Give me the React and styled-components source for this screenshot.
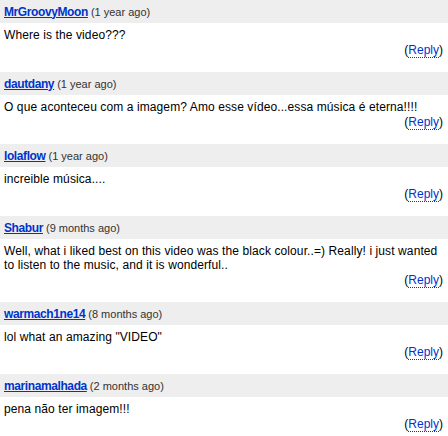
import React from "react"
import styled, { createGlobalStyle } from "styled-components"

const GlobalStyle = createGlobalStyle`
  body {
    margin: 0;
    background: #fff;
    font-family: "Liberation Sans", Arial, sans-serif;
    color: #000;
  }
`

const List = styled.div`
  width: 448px;
  display: flex;
  flex-direction: column;
`

const Header = styled.div`
  height: 23px;
  background: #eeeeee;
  display: flex;
  align-items: center;
  gap: 3px;
  padding: 0 4px;
  box-sizing: border-box;
`

const User = styled.a`
  font-size: 12px;
  letter-spacing: -0.4px;
  font-weight: bold;
  color: #0033cc;
  text-decoration: underline;
  cursor: pointer;
`

const Age = styled.span`
  font-size: 11px;
  color: #333;
`

const Body = styled.div`
  padding: 5px 5px 15px 4px;
`

const Text = styled.div`
  font-size: 12px;
  letter-spacing: 0.1px;
  line-height: 14px;
`

const ReplyRow = styled.div`
  margin-top: 1px;
  font-size: 12px;
  line-height: 14px;
  text-align: right;
`

const ReplyLink = styled.a`
  color: #0033cc;
  text-decoration: none;
  border-bottom: 1px dotted #0033cc;
  cursor: pointer;
`

const comments = [
  { user: "MrGroovyMoon", age: "1 year ago", text: "Where is the video???" },
  {
    user: "dautdany",
    age: "1 year ago",
    text: "O que aconteceu com a imagem? Amo esse vídeo...essa música é eterna!!!!",
  },
  { user: "lolaflow", age: "1 year ago", text: "increible música...." },
  {
    user: "Shabur",
    age: "9 months ago",
    text: "Well, what i liked best on this video was the black colour..=) Really! i just wanted to listen to the music, and it is wonderful..",
  },
  { user: "warmach1ne14", age: "8 months ago", text: 'lol what an amazing "VIDEO"' },
  { user: "marinamalhada", age: "2 months ago", text: "pena não ter imagem!!!" },
]

const Comment = ({ user, age, text }) => (
  <>
    <Header>
      <User>{user}</User>
      <Age>({age})</Age>
    </Header>
    <Body>
      <Text>{text}</Text>
      <ReplyRow>
        (<ReplyLink>Reply</ReplyLink>)
      </ReplyRow>
    </Body>
  </>
)

const App = () => {
  return (
    <>
      <GlobalStyle />
      <List>
        {comments.map((c) => (
          <Comment key={c.user} {...c} />
        ))}
      </List>
    </>
  )
}

export default App
